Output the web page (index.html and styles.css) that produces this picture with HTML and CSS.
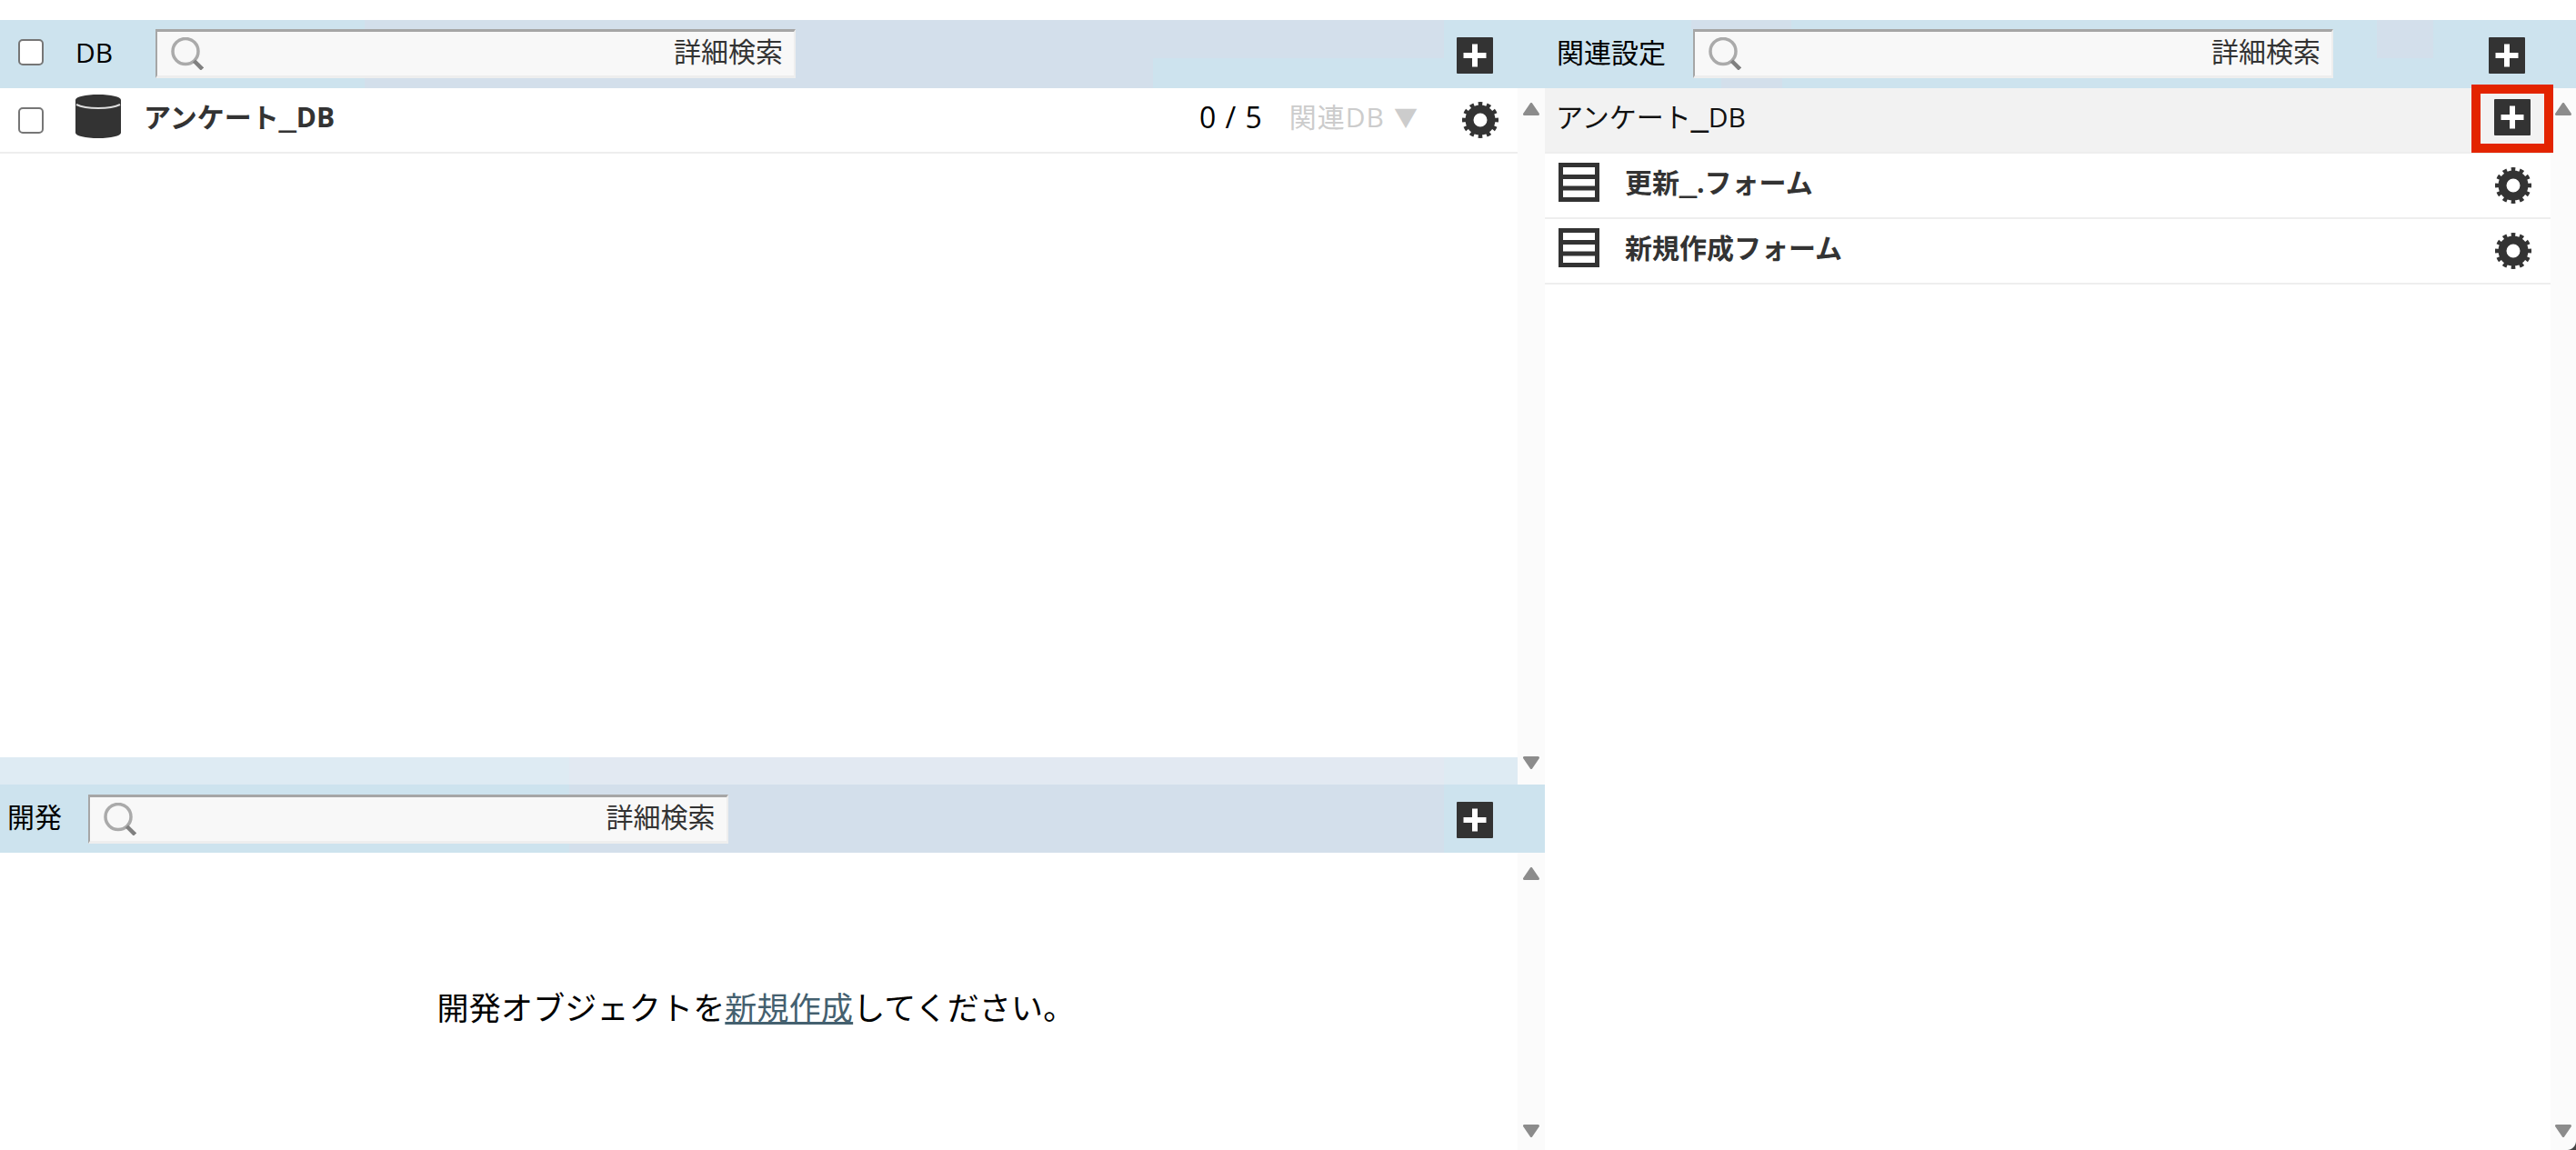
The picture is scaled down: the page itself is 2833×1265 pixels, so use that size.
FILE: index.html
```html
<!DOCTYPE html>
<html lang="ja">
<head>
<meta charset="utf-8">
<title>DB</title>
<link rel="stylesheet" href="styles.css">
</head>
<body>
<svg class="defs" width="0" height="0" aria-hidden="true">
  <symbol id="i-plus" viewBox="0 0 40 40"><rect width="40" height="40" rx="1" fill="#333"/><path d="M20 7.500v25M7.500 20h25" stroke="#fff" stroke-width="6" fill="none"/></symbol>
  <symbol id="i-gear" viewBox="0 0 40 40"><circle cx="20" cy="20" r="17.500" pathLength="24" stroke-dasharray="1 1" stroke-dashoffset="0.5" stroke="#333" stroke-width="5" fill="none"/><circle cx="20" cy="20" r="12" stroke="#333" stroke-width="9" fill="none"/></symbol>
  <symbol id="i-search" viewBox="0 0 37 36"><circle cx="17" cy="15.500" r="14" stroke="#aaa" stroke-width="3.500" fill="none"/><path d="M26.500 26l9 9" stroke="#808080" stroke-width="4.500" fill="none"/></symbol>
  <symbol id="i-up" viewBox="0 0 18 14"><path d="M9 1.500L1.500 12.500h15z" fill="#8c8c8c" stroke="#8c8c8c" stroke-width="3" stroke-linejoin="round"/></symbol>
  <symbol id="i-down" viewBox="0 0 18 14"><path d="M9 12.500L1.500 1.500h15z" fill="#8c8c8c" stroke="#8c8c8c" stroke-width="3" stroke-linejoin="round"/></symbol>
  <symbol id="i-db" viewBox="0 0 50 48"><path d="M0 6C0 2.500 11 0 25 0s25 2.500 25 6v36c0 3.500-11 6-25 6S0 45.500 0 42z" fill="#333"/><path d="M1 11c6 3 15 4 24 4s18-1 24-4" stroke="#ddd" stroke-width="2" fill="none"/></symbol>
  <symbol id="i-form" viewBox="0 0 45 43"><rect x="2.500" y="2.500" width="40" height="38" fill="none" stroke="#333" stroke-width="5"/><path d="M2 15.500h41M2 28h41" stroke="#333" stroke-width="5"/></symbol>
</svg>

<main class="app">
  <section class="col col-left">
    <div class="panel panel-top">
      <header class="bar bar-db">
        <input class="check check-head" type="checkbox" aria-label="全選択">
        <span class="bar-title bar-title-db">DB</span>
        <div class="search">
          <svg class="search-icon"><use href="#i-search"/></svg>
          <span class="search-link">詳細検索</span>
        </div>
        <svg class="plus plus-end"><use href="#i-plus"/></svg>
      </header>
      <div class="body">
        <div class="main">
          <div class="list">
            <div class="row row-db">
              <input class="check" type="checkbox" aria-label="アンケート_DB">
              <svg class="db-icon"><use href="#i-db"/></svg>
              <strong class="name">アンケート<span class="us">_</span>DB</strong>
              <span class="count">0 / 5</span>
              <span class="related">関連DB</span>
              <span class="related-arrow">▼</span>
              <svg class="gear"><use href="#i-gear"/></svg>
            </div>
          </div>
          <div class="splitter"></div>
        </div>
        <div class="track track-top">
          <svg class="arrow"><use href="#i-up"/></svg>
          <svg class="arrow"><use href="#i-down"/></svg>
        </div>
      </div>
    </div>

    <div class="panel panel-bottom">
      <header class="bar bar-dev">
        <span class="bar-title bar-title-dev">開発</span>
        <div class="search">
          <svg class="search-icon"><use href="#i-search"/></svg>
          <span class="search-link">詳細検索</span>
        </div>
        <svg class="plus plus-end"><use href="#i-plus"/></svg>
      </header>
      <div class="body">
        <div class="main message">
          <p class="message-text">開発オブジェクトを<a class="message-link" href="#">新規作成</a>してください。</p>
        </div>
        <div class="track track-bottom">
          <svg class="arrow"><use href="#i-up"/></svg>
          <svg class="arrow"><use href="#i-down"/></svg>
        </div>
      </div>
    </div>
  </section>

  <section class="col col-right">
    <header class="bar bar-rel">
      <span class="bar-title bar-title-rel">関連設定</span>
      <div class="search">
        <svg class="search-icon"><use href="#i-search"/></svg>
        <span class="search-link">詳細検索</span>
      </div>
      <svg class="plus plus-end plus-rel"><use href="#i-plus"/></svg>
    </header>
    <div class="body">
      <div class="main">
        <div class="row row-group">
          <span class="group-name">アンケート<span class="us">_</span>DB</span>
          <div class="highlight-wrap">
            <svg class="plus"><use href="#i-plus"/></svg>
            <div class="highlight"></div>
          </div>
        </div>
        <div class="row row-form">
          <svg class="form-icon"><use href="#i-form"/></svg>
          <strong class="name">更新<span class="us">_</span>.フォーム</strong>
          <svg class="gear gear-form"><use href="#i-gear"/></svg>
        </div>
        <div class="row row-form">
          <svg class="form-icon"><use href="#i-form"/></svg>
          <strong class="name">新規作成フォーム</strong>
          <svg class="gear gear-form"><use href="#i-gear"/></svg>
        </div>
      </div>
      <div class="track track-right">
        <svg class="arrow"><use href="#i-up"/></svg>
        <svg class="arrow"><use href="#i-down"/></svg>
      </div>
    </div>
  </section>
  <div class="corner"></div>
</main>
</body>
</html>
```

FILE: styles.css
```css
* { box-sizing: border-box; }
html, body { height: 100%; }
body {
  margin: 0;
  background: #fff;
  color: #000;
  font-family: "Open Sans", "Noto Sans CJK JP", sans-serif;
  font-size: 30px;
  overflow: hidden;
}
.defs { position: absolute; }
.app {
  position: relative;
  display: grid;
  grid-template-columns: 1699px 1134px;
  height: 1265px;
  padding-top: 22px;
}
.col { display: flex; flex-direction: column; min-width: 0; }
.panel { display: flex; flex-direction: column; }
.panel-top { height: 841px; }
.panel-bottom { flex: 1; min-height: 0; }
.col-right > .body { flex: 1; }

/* header bars */
.bar {
  display: flex;
  align-items: center;
  height: 75px;
  flex: none;
}
.bar-db {
  padding-left: 20px;
  background:
    linear-gradient(#d3dfeb, #d3dfeb) 401px 0 / 1187px 42px no-repeat,
    linear-gradient(#d3dfeb, #d3dfeb) 401px 42px / 867px 33px no-repeat,
    #cde3ee;
}
.bar-dev {
  padding-left: 8px;
  background: linear-gradient(90deg, #cde3ee 626px, #d3dfeb 626px, #d3dfeb 1588px, #cde3ee 1588px);
}
.bar-rel {
  padding-left: 13px;
  background:
    linear-gradient(#d3dfeb, #d3dfeb) 915px 0 / 62px 42px no-repeat,
    linear-gradient(#d3dfeb, #d3dfeb) 161px 0 / 110px 10px no-repeat,
    linear-gradient(#d3dfeb, #d3dfeb) 194px 64px / 67px 11px no-repeat,
    #cde3ee;
}
.bar-title { line-height: 1; margin-bottom: 4px; }
.bar-title-db { margin-left: 35px; width: 88px; }
.bar-title-dev { width: 88.500px; }
.bar-title-rel { width: 150px; }

.search {
  display: flex;
  align-items: center;
  justify-content: space-between;
  width: 704px;
  height: 54px;
  margin-bottom: 1px;
  padding: 0 12px 0 14px;
  background: #f8f8f8;
  border-top: 3px solid #a6a6a6;
  border-left: 2px solid #a6a6a6;
  border-right: 2px solid #eee;
  border-bottom: 3px solid #eee;
}
.bar-dev .search { margin-bottom: 0; margin-top: 1px; }
.search-icon { width: 37px; height: 36px; }
.search-link { color: #333; line-height: 1; margin-bottom: 5px; }

.plus { display: block; width: 40px; height: 40px; flex: none; }
.plus-end { margin-left: auto; margin-right: 57px; margin-top: 2px; }
.plus-rel { margin-right: 56px; }

/* body */
.body { display: flex; }
.panel .body { flex: 1; min-height: 0; }
.main { flex: 1; min-width: 0; display: flex; flex-direction: column; }
.list { flex: 1; }
.splitter {
  height: 30px;
  background: linear-gradient(90deg, #deebf3 626px, #e2e9f2 626px, #e2e9f2 1588px, #deebf3 1588px);
}
.track {
  flex: none;
  width: 30px;
  background: #fbfbfb;
  display: flex;
  flex-direction: column;
  justify-content: space-between;
  align-items: center;
  padding-top: 16px;
}
.track-top { padding-bottom: 17px; }
.track-bottom { padding-bottom: 14px; }
.track-right { width: 28px; padding-bottom: 14px; }
.arrow { display: block; width: 18px; height: 14px; }

/* rows */
.row {
  display: flex;
  align-items: center;
  height: 72px;
  border-bottom: 2px solid #eee;
}
.row-db { padding: 0 21px 0 20px; }
.row-group { background: #f2f2f2; padding: 0 22px 0 12px; justify-content: space-between; }
.row-form { padding: 0 21px 0 15px; }
.check {
  appearance: none;
  -webkit-appearance: none;
  display: block;
  width: 28px;
  height: 29px;
  margin: 0;
  flex: none;
  background: #fff;
  border: 2px solid #767676;
  border-radius: 5px;
}
.check-head { margin-bottom: 4px; }
.db-icon { width: 50px; height: 48px; margin: 0 0 8px 35px; flex: none; }
.name { font-weight: 700; color: #333; line-height: 1; margin-bottom: 6px; }
.us { font-family: "DejaVu Sans", sans-serif; font-size: 38px; line-height: 0; vertical-align: 3px; font-weight: 400; }
.row-db .name { margin-left: 25px; }
.row-form .name { margin-left: 28px; }
.count { margin-left: auto; font-size: 32px; line-height: 1; margin-bottom: 6px; word-spacing: 2px; }
.related { color: #ccc; margin-left: 30px; line-height: 1; margin-bottom: 6px; letter-spacing: 1px; }
.related-arrow { color: #ccc; margin: 0 0 6px 10px; font-size: 26px; line-height: 1; width: 75px; }
.gear { display: block; width: 40px; height: 40px; flex: none; }
.gear-form { margin-left: auto; }
.form-icon { display: block; width: 45px; height: 43px; flex: none; margin-bottom: 7px; }
.group-name { line-height: 1; color: #111; margin-bottom: 6px; }
.highlight-wrap { margin-bottom: 6px; }

/* message */
.message { align-items: center; justify-content: center; padding: 15px 6px 0 0; }
.message-text { margin: 0; font-size: 35px; line-height: 1.2; letter-spacing: 0.2px; }
.message-link { color: #44606f; text-decoration: underline; }

/* annotation */
.highlight-wrap { position: relative; }
.highlight {
  position: absolute;
  top: -16px;
  left: -25px;
  width: 90px;
  height: 75px;
  border: 10px solid #e32400;
}

/* window corner */
.corner {
  position: absolute;
  right: 0;
  bottom: 0;
  width: 10px;
  height: 10px;
  background: radial-gradient(circle at 0 0, transparent 9.500px, #444 10.500px);
}
```
